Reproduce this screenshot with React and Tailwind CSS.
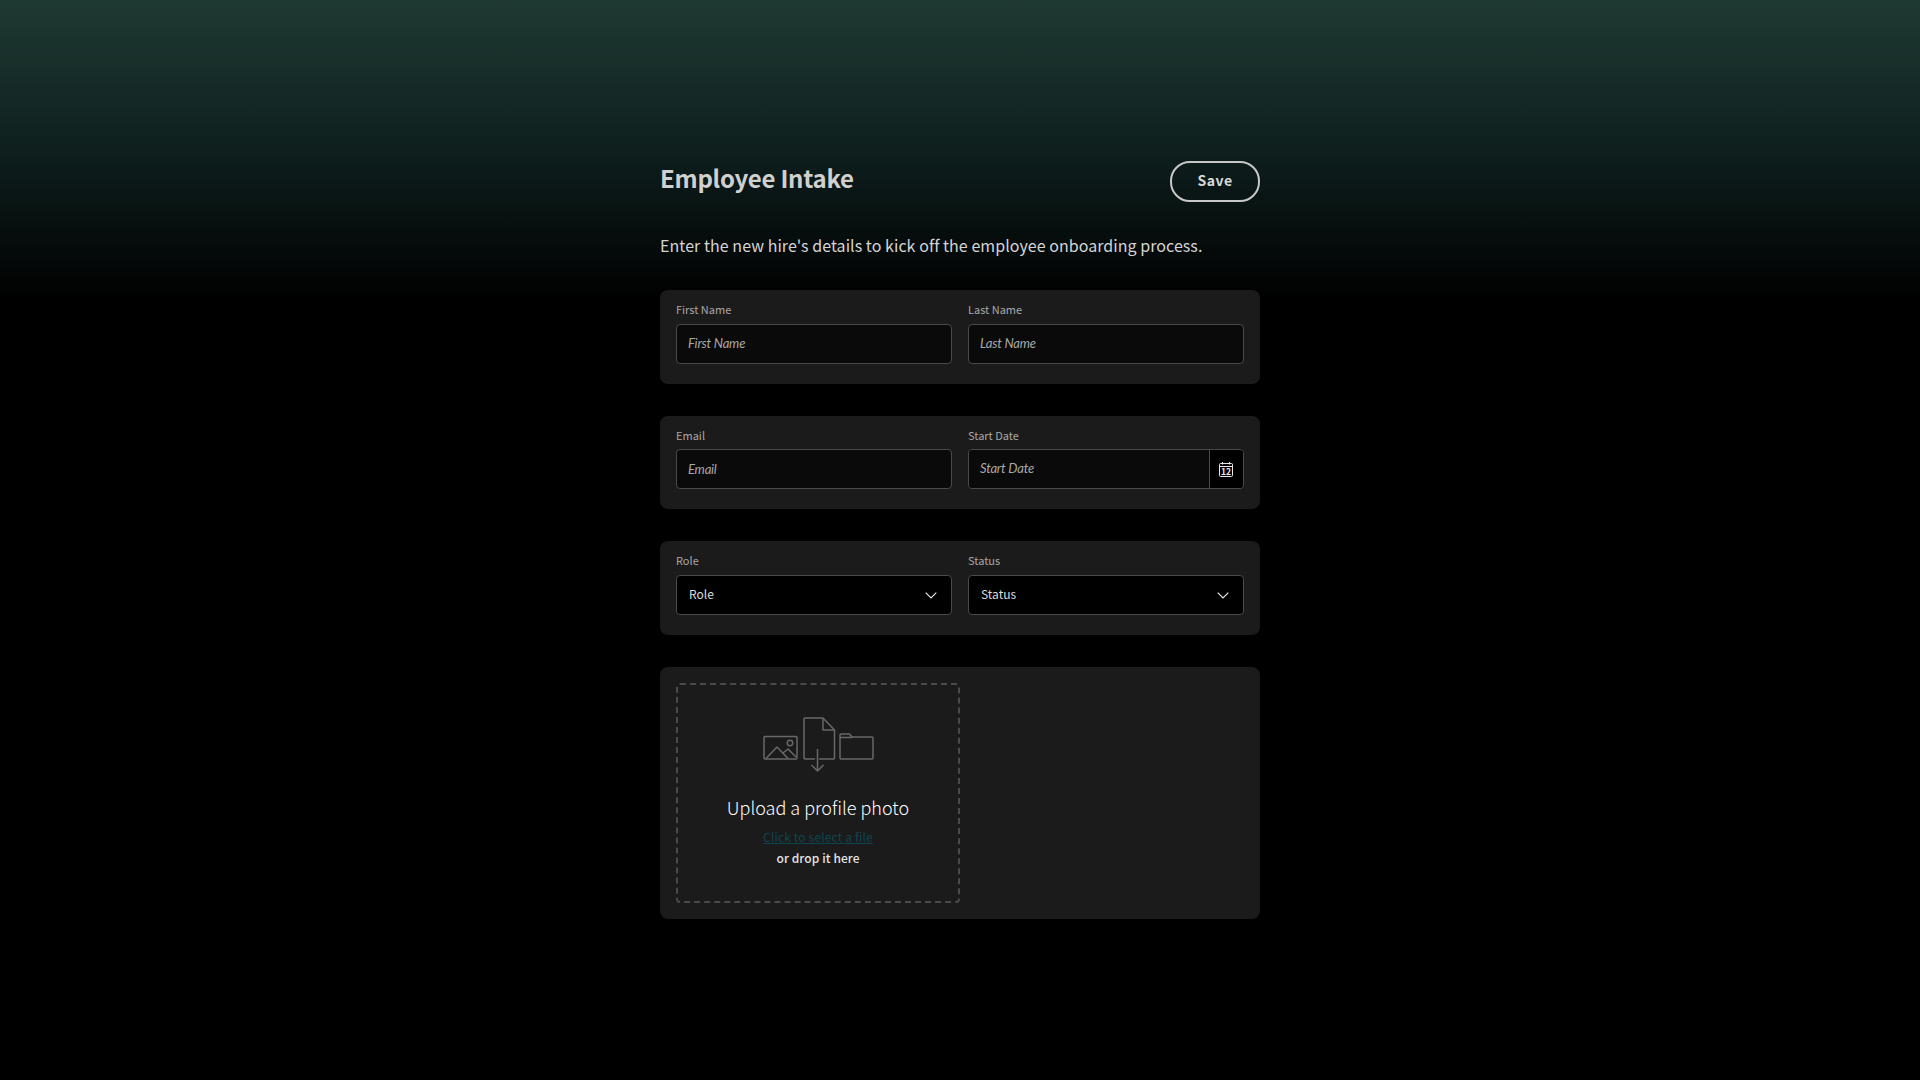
const sans = "font-['Noto_Sans_CJK_SC','Noto_Sans',sans-serif]";

function Label({ children }) {
  return <label className="block h-[15.6px] mb-[7px] text-[11px] leading-[16px] text-[#a8a8a8]">{children}</label>;
}

function TextField({ label, placeholder }) {
  return (
    <div>
      <Label>{label}</Label>
      <input
        placeholder={placeholder}
        className="block w-full h-10 px-[11px] pb-px rounded border border-[#4a4a4a] bg-[#0a0a0a] text-[13px] tracking-[-0.2px] italic font-['Lato',sans-serif] placeholder:text-[#a8a8a8] outline-none"
      />
    </div>
  );
}

function DateField({ label, placeholder }) {
  return (
    <div>
      <Label>{label}</Label>
      <div className="flex h-10 rounded border border-[#4a4a4a] overflow-hidden">
        <input
          placeholder={placeholder}
          className="min-w-0 flex-1 px-[11px] bg-[#0a0a0a] text-[13px] tracking-[-0.2px] italic font-['Lato',sans-serif] placeholder:text-[#a8a8a8] outline-none"
        />
        <div className="w-[34px] pr-[2px] flex items-center justify-center bg-black border-l border-[#4a4a4a]">
          <svg width="14" height="15" viewBox="0 0 14 15" fill="none" stroke="#e8e8e8" strokeWidth="1">
            <rect x="0.5" y="1.5" width="13" height="13" rx="1" />
            <path d="M0.5 4.5h13M3.5 0v2.5M10.5 0v2.5" />
            <text x="7" y="13" textAnchor="middle" fontSize="8.5" fontWeight="700" fill="#e8e8e8" stroke="none" fontFamily="Noto Sans CJK SC, sans-serif">12</text>
          </svg>
        </div>
      </div>
    </div>
  );
}

function SelectField({ label }) {
  return (
    <div>
      <Label>{label}</Label>
      <button className="w-full h-10 pl-3 pr-[14px] pb-px flex items-center justify-between rounded border border-[#4a4a4a] bg-black text-xs text-[#dcdcdc]">
        <span>{label}</span>
        <svg className="mt-[3px]" width="12" height="7" viewBox="0 0 12 7" fill="none" stroke="#e8e8e8" strokeWidth="1.2">
          <path d="M0.7 0.7 6 6l5.3-5.3" />
        </svg>
      </button>
    </div>
  );
}

function Card({ children }) {
  return <div className="grid grid-cols-2 gap-4 rounded-lg bg-[#1b1b1b] px-4 pt-[11px] pb-5">{children}</div>;
}

function UploadIcons() {
  return (
    <svg width="112" height="56" viewBox="0 0 112 56" fill="none" stroke="#686868" strokeWidth="1.5" strokeLinejoin="round">
      <rect x="2" y="19.5" width="33" height="22.5" rx="1" />
      <circle cx="28" cy="26" r="2.7" />
      <path d="M4 41.5 15 30l11 11.5M21 36l5-4 8 8" />
      <path d="M53 42h-10a1 1 0 0 1-1-1V2a1 1 0 0 1 1-1h18L72.5 13v28a1 1 0 0 1-1 1H57" />
      <path d="M61 1.5V13h11.5" />
      <path d="M55.5 32v22M49.5 48l6 6 6-6" />
      <path d="M78 41V18a1 1 0 0 1 1-1h8.5l2.5 3h20a1 1 0 0 1 1 1V41a1 1 0 0 1-1 1H79a1 1 0 0 1-1-1Z" />
      <path d="M78 20.5h12" />
    </svg>
  );
}

export default function App() {
  return (
    <div className={`${sans} min-h-[1080px] bg-black bg-[linear-gradient(to_bottom,#1f3a33_0px,#0e1f1e_150px,#000000_300px)]`}>
      <div className="mx-auto w-[600px] pt-[161px]">
        <header className="flex items-start justify-between h-[41px]">
          <h1 className="text-2xl leading-[34px] tracking-[-0.25px] font-semibold text-[#d0d0d0]">Employee Intake</h1>
          <button className="w-[90px] h-[41px] pb-[3px] rounded-[20px] border-2 border-[#c8c8c8] text-sm font-semibold tracking-[0.5px] text-[#d8d8d8]">
            Save
          </button>
        </header>
        <p className="mt-[29px] mb-[31px] text-base leading-7 tracking-[0.05px] text-[#d4d4d4]">
          Enter the new hire's details to kick off the employee onboarding process.
        </p>
        <div className="flex flex-col gap-8">
          <Card>
            <TextField label="First Name" placeholder="First Name" />
            <TextField label="Last Name" placeholder="Last Name" />
          </Card>
          <Card>
            <TextField label="Email" placeholder="Email" />
            <DateField label="Start Date" placeholder="Start Date" />
          </Card>
          <Card>
            <SelectField label="Role" />
            <SelectField label="Status" />
          </Card>
          <div className="rounded-lg bg-[#1b1b1b] p-4">
            <div className="w-[284px] h-[220px] flex flex-col items-center pt-[32px] rounded border-2 border-dashed border-[#4a4a4a]">
              <UploadIcons />
              <div className="mt-[19px] text-lg leading-[30px] font-light text-white">Upload a profile photo</div>
              <a className="mt-[5px] text-xs tracking-[0.16px] leading-5 underline text-[#0d4650]">Click to select a file</a>
              <div className="mt-[1px] text-xs tracking-[0.1px] leading-5 font-medium text-[#e4e4e4]">or drop it here</div>
            </div>
          </div>
        </div>
      </div>
    </div>
  );
}
